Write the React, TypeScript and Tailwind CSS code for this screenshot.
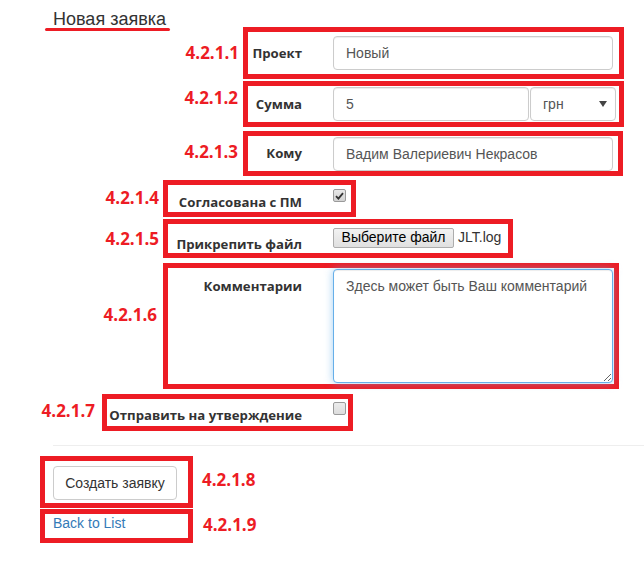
import React from "react";

const red = "border-[5px] border-[#ed1c24]";

function Tag({ text, className }: { text: string; className?: string }) {
  return (
    <span
      className={`font-['Open_Sans',sans-serif] text-[17px] font-bold leading-[24px] text-[#ed1c24] whitespace-nowrap ${className ?? ""}`}
    >
      {text}
    </span>
  );
}

function Label({ text, width, className }: { text: string; width: string; className?: string }) {
  return (
    <div className={`flex shrink-0 justify-end ${width} ${className ?? ""}`}>
      <span className="whitespace-nowrap font-['Open_Sans',sans-serif] text-[13.2px] font-bold leading-[20px] text-[#333]">
        {text}
      </span>
    </div>
  );
}

function Check({ checked, className }: { checked?: boolean; className?: string }) {
  return (
    <span
      className={`flex h-[13px] w-[13px] shrink-0 items-center justify-center rounded-[2px] border border-[#9a9a9a] bg-gradient-to-b from-[#e8e8e8] to-[#d2d2d2] ${className ?? ""}`}
    >
      {checked && (
        <svg width="9" height="8" viewBox="0 0 9 8">
          <path d="M1 4.2 L3.4 6.6 L8 1.2" fill="none" stroke="#333" strokeWidth="1.8" />
        </svg>
      )}
    </span>
  );
}

const inputCls =
  "h-[34px] rounded-[4px] border border-[#ccc] bg-white px-3 font-['Liberation_Sans',sans-serif] text-[14px] text-[#555] shadow-[inset_0_1px_1px_rgba(0,0,0,0.075)] outline-none";

export default function App() {
  return (
    <div className="h-[566px] w-[644px] overflow-hidden bg-white font-['Liberation_Sans',sans-serif]">
      {/* title */}
      <div className="h-[27px] pl-[45px] pt-[9px]">
        <div className="w-[125px]">
          <div className="pl-[8px] text-[18px] leading-[20px] text-[#333]">Новая заявка</div>
          <div className="mt-[-1px] h-[3px] rounded-full bg-[#ed1c24]" />
        </div>
      </div>

      {/* 4.2.1.1 */}
      <div className="flex items-start">
        <div className="flex w-[243px] justify-end pr-[4px] pt-[14px]">
          <Tag text="4.2.1.1" />
        </div>
        <div className={`${red} flex h-[52px] w-[381px] items-center pt-[1px] pb-[2px]`}>
          <Label text="Проект" width="w-[54px]" />
          <input readOnly defaultValue="Новый" className={`${inputCls} ml-[31px] w-[280px]`} />
        </div>
      </div>

      {/* 4.2.1.2 */}
      <div className="mt-[2px] flex items-start">
        <div className="flex w-[243px] justify-end pr-[5px] pt-[5px]">
          <Tag text="4.2.1.2" />
        </div>
        <div className={`${red} flex h-[46px] w-[381px] items-center`}>
          <Label text="Сумма" width="w-[54px]" />
          <input readOnly defaultValue="5" className={`${inputCls} ml-[31px] w-[196px]`} />
          <div className={`${inputCls} ml-[1px] flex w-[86px] items-center justify-between pr-[8px]`}>
            <span>грн</span>
            <svg width="8" height="6" viewBox="0 0 8 6">
              <path d="M0 0 H8 L4 6 Z" fill="#444" />
            </svg>
          </div>
        </div>
      </div>

      {/* 4.2.1.3 */}
      <div className="mt-[4px] flex items-start">
        <div className="flex w-[243px] justify-end pr-[5px] pt-[9px]">
          <Tag text="4.2.1.3" />
        </div>
        <div className={`${red} flex h-[45px] w-[380px] items-start pt-[1px]`}>
          <Label text="Кому" width="w-[54px]" className="pt-[6px]" />
          <input
            readOnly
            defaultValue="Вадим Валериевич Некрасов"
            className={`${inputCls} ml-[31px] h-[33px] w-[280px]`}
          />
        </div>
      </div>

      {/* 4.2.1.4 */}
      <div className="mt-[4px] flex items-start">
        <div className="flex w-[163px] justify-end pr-[4px] pt-[6px]">
          <Tag text="4.2.1.4" />
        </div>
        <div className={`${red} flex h-[37px] w-[193px] items-start`}>
          <Label text="Согласована с ПМ" width="w-[134px]" className="mt-[7px]" />
          <Check checked className="ml-[31px] mt-[4px]" />
        </div>
      </div>

      {/* 4.2.1.5 */}
      <div className="mt-[2px] flex items-start">
        <div className="flex w-[163px] justify-end pr-[4px] pt-[8px]">
          <Tag text="4.2.1.5" />
        </div>
        <div className={`${red} flex h-[39px] w-[350px] items-start`}>
          <Label text="Прикрепить файл" width="w-[134px]" className="mt-[10px]" />
          <div className="ml-[31px] mt-[3px] flex items-center">
            <span className="flex h-[20px] w-[121px] items-center justify-center rounded-[2px] border border-[#adadad] bg-gradient-to-b from-[#f2f2f2] to-[#e0e0e0] text-[14px] text-black">
              Выберите файл
            </span>
            <span className="ml-[4px] text-[14px] text-[#333]">JLT.log</span>
          </div>
        </div>
      </div>

      {/* 4.2.1.6 */}
      <div className="mt-[5px] flex items-start">
        <div className="flex w-[163px] justify-end pr-[6px] pt-[40px]">
          <Tag text="4.2.1.6" />
        </div>
        <div className={`${red} flex h-[126px] w-[456px] items-start`}>
          <Label text="Комментарии" width="w-[134px]" className="mt-[8px]" />
          <textarea
            readOnly
            defaultValue="Здесь может быть Ваш комментарий"
            className="ml-[31px] mt-[1px] h-[114px] w-[280px] resize rounded-[4px] border border-[#66afe9] bg-white px-3 py-[6px] font-['Liberation_Sans',sans-serif] text-[14px] leading-[20px] text-[#555] shadow-[inset_0_1px_1px_rgba(0,0,0,0.075),0_0_8px_rgba(102,175,233,0.6)] outline-none"
          />
        </div>
      </div>

      {/* 4.2.1.7 */}
      <div className="mt-[5px] flex items-start">
        <div className="flex w-[102px] justify-end pr-[7px] pt-[5px]">
          <Tag text="4.2.1.7" />
        </div>
        <div className={`${red} flex h-[37px] w-[251px] items-start`}>
          <Label text="Отправить на утверждение" width="w-[195px]" className="mt-[6px]" />
          <Check className="ml-[31px] mt-[3px] from-[#ececec] to-[#dcdcdc]" />
        </div>
      </div>

      <div className="ml-[53px] mt-[14px] h-px bg-[#eee]" />

      {/* 4.2.1.8 */}
      <div className="ml-[40px] mt-[10px] flex items-start">
        <div className={`${red} h-[52px] w-[153px] pl-[8px] pt-[5px]`}>
          <button className="h-[34px] w-[124px] rounded-[4px] border border-[#ccc] bg-white text-[14px] text-[#333]">
            Создать заявку
          </button>
        </div>
        <Tag text="4.2.1.8" className="ml-[9px] mt-[12px]" />
      </div>

      {/* 4.2.1.9 */}
      <div className="ml-[40px] mt-[1px] flex items-start">
        <div className={`${red} h-[34px] w-[153px] pl-[8px]`}>
          <a href="#" className="block text-[14px] leading-[19px] text-[#337ab7]">
            Back to List
          </a>
        </div>
        <Tag text="4.2.1.9" className="ml-[10px] mt-[4px]" />
      </div>
    </div>
  );
}
